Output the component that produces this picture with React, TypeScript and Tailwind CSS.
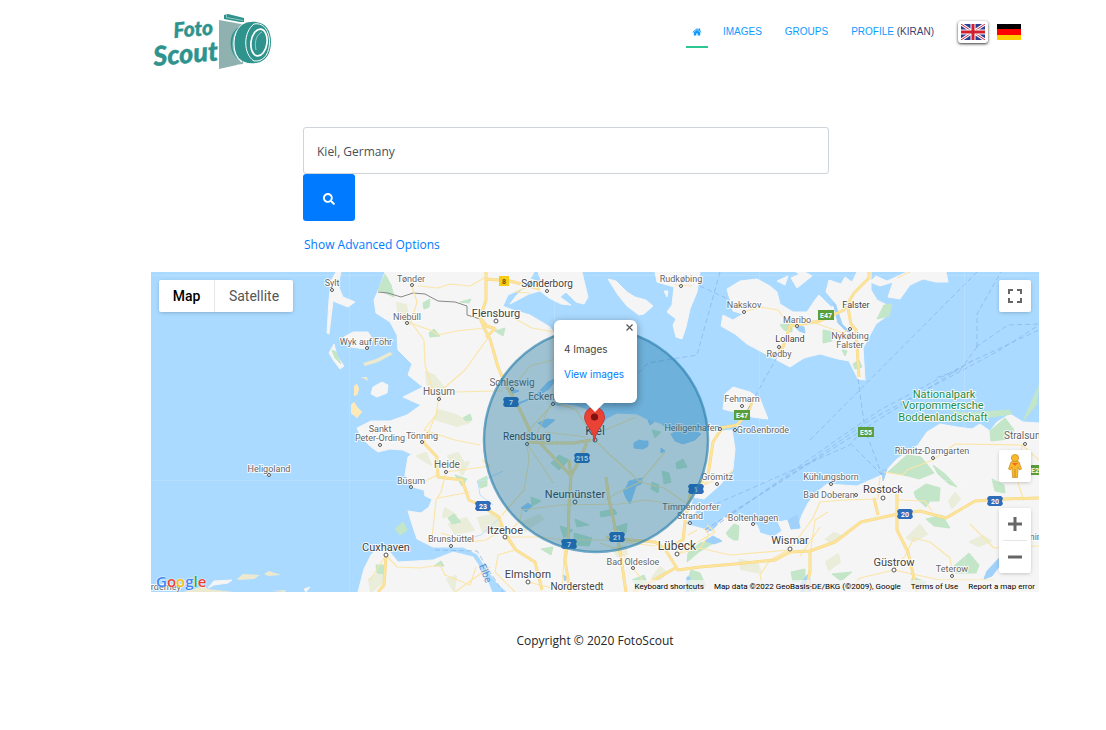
import React from "react";
import { FaSearch } from "react-icons/fa";

type Place = { name: string; x: number; y: number; size?: number; dot?: [number, number]; dark?: boolean };

const places: Place[] = [
  { name: "Sylt", x: 332, y: 286, dot: [332, 290] },
  { name: "Tønder", x: 411, y: 282, dot: [412, 285] },
  { name: "Niebüll", x: 407, y: 320, dot: [407, 323] },
  { name: "Wyk auf Föhr", x: 366, y: 345, dot: [367, 348] },
  { name: "Flensburg", x: 496, y: 317, size: 11, dot: [496, 321], dark: true },
  { name: "Sønderborg", x: 547, y: 287, size: 10, dot: [547, 291], dark: true },
  { name: "Rudkøbing", x: 681, y: 282, dot: [681, 286] },
  { name: "Nakskov", x: 744, y: 308, dot: [744, 312] },
  { name: "Maribo", x: 797, y: 323, dot: [797, 326] },
  { name: "Lolland", x: 790, y: 342, dark: true },
  { name: "Rødby", x: 779, y: 357, dot: [779, 347] },
  { name: "Falster", x: 856, y: 308, dark: true },
  { name: "Nykøbing", x: 850, y: 339, dot: [850, 329] },
  { name: "Falster", x: 850, y: 348 },
  { name: "Schleswig", x: 512, y: 386, size: 10, dot: [512, 389] },
  { name: "Husum", x: 439, y: 395, size: 10, dot: [439, 399] },
  { name: "Eckernförde", x: 555, y: 400, size: 10, dot: [553, 404] },
  { name: "Sankt", x: 380, y: 432 },
  { name: "Peter-Ording", x: 380, y: 441, dot: [380, 445] },
  { name: "Tönning", x: 422, y: 439, dot: [422, 442] },
  { name: "Rendsburg", x: 527, y: 440, size: 10, dot: [527, 444], dark: true },
  { name: "Kiel", x: 595, y: 435, size: 12, dot: [595, 440], dark: true },
  { name: "Fehmarn", x: 742, y: 402, dot: [742, 406] },
  { name: "Heiligenhafen", x: 692, y: 431, dot: [720, 429] },
  { name: "Großenbrode", x: 763, y: 433, dot: [735, 430] },
  { name: "Heligoland", x: 269, y: 472, dot: [269, 475] },
  { name: "Heide", x: 447, y: 468, size: 10, dot: [446, 472] },
  { name: "Büsum", x: 411, y: 484, dot: [411, 487] },
  { name: "Neumünster", x: 575, y: 498, size: 11, dot: [575, 502], dark: true },
  { name: "Itzehoe", x: 505, y: 534, size: 11, dot: [505, 537], dark: true },
  { name: "Brunsbüttel", x: 451, y: 542, dot: [451, 546] },
  { name: "Cuxhaven", x: 386, y: 551, size: 11, dot: [386, 555], dark: true },
  { name: "Elmshorn", x: 528, y: 578, size: 11, dot: [528, 582], dark: true },
  { name: "Norderstedt", x: 577, y: 590, size: 10, dark: true },
  { name: "Bad Oldesloe", x: 633, y: 565, dot: [633, 568] },
  { name: "Lübeck", x: 677, y: 550, size: 12, dot: [677, 554], dark: true },
  { name: "Grömitz", x: 717, y: 480, dot: [717, 484] },
  { name: "Timmendorfer", x: 691, y: 510 },
  { name: "Strand", x: 690, y: 519, dot: [690, 523] },
  { name: "Boltenhagen", x: 753, y: 521, dot: [753, 524] },
  { name: "Wismar", x: 790, y: 544, size: 11, dot: [790, 549], dark: true },
  { name: "Kühlungsborn", x: 831, y: 480, dot: [831, 484] },
  { name: "Bad Doberan", x: 829, y: 498, dot: [856, 495] },
  { name: "Rostock", x: 883, y: 493, size: 11, dot: [883, 498], dark: true },
  { name: "Ribnitz-Damgarten", x: 932, y: 454, dot: [933, 458] },
  { name: "Stralsund", x: 1025, y: 439, size: 10, dot: [1025, 444] },
  { name: "Güstrow", x: 894, y: 566, size: 11, dot: [894, 570], dark: true },
  { name: "Teterow", x: 952, y: 572, dot: [952, 576] },
  { name: "Demmin", x: 1025, y: 540 },
  { name: "Norderney", x: 160, y: 590 },
];

const land = [
  "M385 272 L378 291 L374 300 L376 313 L390 322 L397 335 L398 350 L412 364 L408 375 L423 387 L403 397 L421 405 L407 415 L390 421 L371 421 L357 428 L361 437 L370 446 L378 452 L390 449 L403 450 L411 454 L424 444 L408 457 L405 475 L413 487 L424 490 L425 496 L432 499 L429 507 L421 513 L408 511 L412 524 L417 539 L433 547 L463 547 L477 554 L487 569 L497 583 L507 592 L1039 592 L1039 423 L1023 422 L1010 414 L997 422 L990 431 L980 424 L972 429 L957 427 L940 424 L927 432 L918 445 L897 459 L882 475 L873 479 L857 486 L827 484 L817 492 L808 503 L802 515 L797 530 L789 520 L778 522 L782 531 L773 537 L760 533 L757 525 L740 517 L730 514 L722 519 L712 532 L700 528 L685 524 L697 510 L691 504 L693 497 L704 499 L720 485 L733 469 L735 449 L732 430 L713 432 L690 430 L667 429 L660 424 L647 420 L637 415 L617 414 L607 419 L597 431 L593 412 L575 406 L553 403 L571 397 L575 367 L550 327 L530 315 L513 310 L502 306 L493 315 L502 308 L508 295 L523 288 L532 276 L534 272 Z",
  "M358 592 L364 569 L371 555 L378 547 L389 551 L398 562 L433 560 L453 552 L473 557 L485 575 L492 592 Z",
  "M510 304 L516 296 L524 288 L518 280 L531 279 L542 283 L538 272 L582 272 L585 285 L588 297 L584 304 L576 302 L566 292 L560 297 L571 305 L561 304 L549 298 L540 291 L529 294 Z",
  "M733 387 L750 392 L760 399 L768 419 L752 417 L743 412 L730 411 L723 409 L725 394 Z",
  "M727 289 L740 281 L757 279 L770 286 L777 292 L780 304 L793 312 L807 312 L815 300 L819 295 L831 307 L838 306 L826 292 L829 280 L841 284 L845 277 L852 282 L857 272 L871 272 L871 290 L877 300 L891 307 L888 315 L876 324 L863 348 L865 380 L858 379 L849 361 L838 359 L820 354 L804 358 L790 367 L777 360 L747 344 L735 334 L721 326 L723 315 L733 320 L743 314 L733 311 Z",
  "M655 272 L700 272 L697 292 L690 309 L686 327 L682 339 L676 337 L673 325 L676 319 L667 312 L672 305 L674 287 L657 282 Z",
  "M608 279 L616 281 L627 292 L635 297 L646 300 L653 306 L644 314 L639 315 L627 306 L618 295 Z",
  "M888 297 L893 282 L880 286 L870 282 L876 276 L887 281 L907 272 L946 272 L948 282 L936 282 L923 279 L910 285 L900 299 Z",
  "M341 272 L338 285 L343 297 L355 302 L348 307 L333 301 L329 334 L327 333 L329 300 L331 281 L336 272 Z",
  "M344 337 L353 332 L368 332 L373 340 L365 349 L351 347 Z",
  "M334 344 L337 356 L344 366 L340 369 L334 361 L329 353 Z",
  "M373 387 L382 382 L388 385 L387 393 L377 397 L371 394 Z",
  "M777 281 L788 276 L785 285 Z M791 278 L805 272 L812 276 L797 288 Z M796 272 L803 272 L805 278 Z",
  "M208 588 L214 581 L232 580 L228 583 L214 585 Z M304 589 L310 587 L306 592 Z M664 291 L668 291 L667 297 Z",
];

const sand = [
  "M363 363 L376 359 L390 352 L393 354 L378 362 L365 366 Z",
  "M354 386 L357 384 L359 389 L357 395 L354 396 Z M351 405 L354 402 L358 408 L362 412 L357 418 L351 413 Z",
  "M237 579 L243 574 L260 575 L254 579 L239 580 Z M264 574 L269 571 L281 575 L268 576 Z M183 592 L204 586 L208 589 L233 592 Z",
  "M361 377 L367 377 L368 381 Z M271 591 L285 590 L286 592 Z",
];

const greens = [
  "M378 290 L385 274 L391 285 L394 297 Z", "M423 303 l7 -4 -1 8 -5 2 Z", "M429 333 l5 -4 6 7 -10 1 Z",
  "M460 302 l11 -3 -2 4 Z", "M495 331 l10 -3 -2 8 Z", "M463 418 l7 -4 2 6 -6 1 Z", "M448 518 l6 -4 7 8 -9 2 Z",
  "M477 481 l10 -5 0 10 -7 2 Z", "M455 475 l12 4 -5 7 Z", "M541 549 l12 -2 -2 8 Z", "M560 526 l13 4 -9 8 Z",
  "M575 519 l14 6 -12 2 Z", "M559 455 l10 5 -10 10 -8 -7 Z", "M531 497 l10 4 -9 5 Z", "M662 471 l7 2 2 9 -7 2 Z",
  "M652 482 l7 3 -1 8 -7 -4 Z", "M574 533 l18 5 -3 8 -15 -1 Z", "M613 528 l14 -5 -1 10 Z",
  "M726 533 l8 -9 5 2 -1 14 -4 0 -5 -3 Z", "M688 553 l12 -10 20 -4 -21 13 -12 10 Z", "M691 570 l9 3 6 13 -14 6 -5 -10 Z",
  "M888 472 l19 -17 14 2 13 16 -15 6 -11 -3 Z", "M914 492 l12 -8 14 4 -1 13 -9 0 -4 6 -10 -9 Z",
  "M933 465 l12 9 12 13 -8 -3 -11 -10 Z", "M926 519 l16 -4 8 13 -16 -2 Z", "M954 566 l15 -13 10 12 -3 8 -20 0 Z",
  "M791 572 l14 -3 0 11 -12 2 Z", "M832 574 l20 -2 -11 9 Z", "M913 577 l13 5 -7 8 -9 -8 Z",
  "M992 479 l12 6 1 8 -10 -2 Z", "M990 431 l15 -13 9 12 -6 9 -17 2 Z", "M1023 421 l9 -20 7 -15 -3 19 Z",
  "M780 325 l12 -4 0 11 -8 -2 Z", "M892 304 l-3 12 -12 3 7 -14 Z", "M950 411 l17 2 42 -3 3 4 -35 5 Z",
  "M853 364 l6 -4 3 7 -7 2 Z", "M823 330 l10 2 -1 9 -9 2 Z", "M842 350 l5 1 -2 5 Z",
  "M652 430 l9 2 -6 6 Z", "M676 463 l7 -4 4 8 -10 2 Z", "M600 512 l14 -3 3 5 -16 3 Z",
  "M395 529 l8 -7 4 8 -7 5 Z", "M376 565 l8 0 2 9 -9 -1 Z", "M434 566 l7 -5 3 5 Z",
  "M632 580 l12 -5 3 7 -9 6 Z", "M332 350 l4 2 5 12 -6 -6 Z",
];

const woods = [
  "M397 303 l9 2 4 19 -11 -6 Z", "M426 372 l9 4 5 20 -13 -12 Z", "M436 378 l9 11 -7 3 Z",
  "M448 456 l10 -3 5 8 -13 -1 Z", "M438 410 l15 4 17 8 -13 4 -22 -7 Z", "M445 508 l11 7 -13 2 Z",
  "M449 524 l17 -6 8 12 -19 4 Z", "M417 456 l9 -3 5 12 Z", "M478 518 l17 -4 6 14 -18 4 Z",
  "M457 464 l12 -2 -7 13 Z", "M522 522 l18 -7 3 4 -18 12 Z", "M369 579 l12 -7 4 8 -14 12 Z",
  "M447 579 l9 -3 -2 15 Z", "M612 548 l13 -2 2 8 -10 2 Z", "M652 578 l8 -11 7 6 -8 7 Z",
  "M740 560 l18 4 3 9 -20 -4 Z", "M907 538 l13 -13 7 9 -12 7 Z", "M826 539 l8 -6 7 3 -10 7 Z",
  "M970 542 l13 -6 8 5 -12 5 Z", "M949 501 l6 -8 5 6 -8 9 Z", "M826 562 l12 -8 2 8 -11 8 Z",
  "M1004 560 l12 -8 7 16 -19 3 Z",
];

const lakes = [
  "M515 404 l19 -7 14 -15 9 -4 -8 11 -10 6 -20 9 Z", "M511 389 l8 2 -8 3 Z", "M538 423 l9 -4 8 1 -10 8 Z",
  "M634 443 l5 -3 4 1 5 0 0 5 -5 3 -9 -1 Z", "M671 434 l8 -4 15 0 7 4 -6 6 -12 4 -8 -3 Z",
  "M626 488 l3 -7 14 -3 -2 6 -5 2 -6 18 -4 -6 -3 -8 Z", "M521 508 l7 -5 4 3 -6 6 Z", "M661 448 l4 3 -4 2 Z",
  "M987 571 l15 -16 1 6 -11 15 -8 3 Z", "M801 583 l8 -10 2 18 -10 1 Z", "M788 520 l9 -5 3 13 -9 1 Z",
  "M705 541 l8 -5 9 5 -8 3 Z", "M687 577 l3 0 -1 15 -3 0 Z", "M882 470 l5 -1 -4 12 Z",
  "M794 325 l10 2 1 6 -6 -2 Z", "M563 575 l4 2 -2 4 Z", "M648 420 l6 2 -4 3 Z", "M833 302 l3 4 6 18 8 8 -4 -1 -8 -8 Z",
];

const minorRoads = [
  "M418 286 L438 288 L450 284 L470 286 L486 277 M412 286 L417 302 L411 322 L424 340 L425 365 L432 387 L439 396 L436 415 L424 442",
  "M407 322 L430 330 L438 335 L456 331 L495 327 M439 396 L455 392 L494 391 L503 391 M490 335 L465 370 L443 389",
  "M496 316 L514 318 L532 328 L554 332 M512 389 L530 366 L560 358 M438 412 L424 430 L455 440 L480 445",
  "M446 472 L441 492 L436 500 L432 538 M446 472 L490 466 L482 460 M438 498 L470 492 M424 482 L437 475",
  "M441 533 L470 542 L486 540 L502 530 M505 537 L520 520 L522 510 L560 505 L620 504 L645 500 L680 505",
  "M527 444 L529 460 L524 490 L502 515 M527 444 L545 470 L553 483 M545 432 L587 437 M505 537 L540 537 L565 540 L605 540 L655 546",
  "M595 440 L610 455 L625 468 L640 482 L615 494 L606 500 M640 482 L665 452 M640 482 L664 488 L689 505",
  "M605 430 L636 417 M551 404 L535 437 L527 444 M595 440 L576 410 L553 401 M553 404 L520 440",
  "M386 555 L397 567 L420 568 L440 565 L445 575 L470 585 L476 567 M386 555 L370 580 M455 592 L490 567",
  "M505 537 L515 550 L498 555 L495 572 L515 592 M565 540 L562 592 M528 582 L560 590 M633 568 L620 550 L600 543 M633 568 L650 590",
  "M677 554 L700 548 L709 535 L704 528 M700 548 L730 555 L790 550 M688 535 L697 530 M677 554 L715 532 L707 525",
  "M790 549 L770 560 L760 575 L764 592 M790 549 L813 518 L820 502 L845 500 L878 499 M800 556 L820 527 M878 498 L880 477",
  "M810 554 L815 520 L828 512 M898 500 L925 501 L932 511 M884 472 L903 475 L907 470 L933 460 L955 444 L1022 445",
  "M894 570 L905 556 L914 538 L930 542 L950 558 L953 575 M894 570 L860 578 L850 588 L811 590 M894 570 L940 580 L994 580 M970 524 L994 548 L1039 546",
  "M1022 445 L1018 483 L1024 501 M1022 445 L1039 460 M744 312 L760 307 L778 310 L788 323 M812 322 L843 333 L850 328 M897 278 L910 272",
  "M675 285 L692 286 M713 474 L704 485 L720 478 L733 471 M538 283 L515 292 L530 293",
];

const majorRoads = [
  "M486 272 L486 300 L480 318 L485 330 L490 339 L498 367 L505 384 L515 400 L523 416 L530 431 L541 444 L571 476 L569 505 L568 543 L565 560 L570 592",
  "M486 337 L495 329 L487 326 L480 318 M486 279 L510 281 L540 289",
  "M423 442 L437 457 L438 477 L462 480 L469 500 L480 505 L499 517 L504 532 L516 550 L535 562 L542 590",
  "M587 442 L582 455 L571 476 M571 476 L569 460 M606 477 L609 500 L618 540 L622 565 L626 592",
  "M527 442 L550 443 L574 443 L591 440",
  "M722 428 L713 442 L708 475 L690 495 L685 522 L683 540 L665 549 L678 570 L700 567 L735 564 L775 560 L790 552 L810 551 L835 542 L861 522 L898 514 L920 511 L946 518 L975 501 L1005 499 L1039 498",
  "M897 494 L897 530 L908 552 L917 592 M633 592 L677 567 M386 557 L384 585 L378 592",
  "M606 537 L618 539 L655 542 L665 549 M720 428 L737 425 L748 412 L752 402 M790 326 L820 321 L844 310 L854 293 L869 278 L869 272",
  "M790 326 L783 347 L779 352 M848 308 L851 324 L856 330 L859 377 M874 498 L878 515 M810 551 L810 571 L806 592",
];

const ferries = [
  "M720 272 L697 355 L648 363 L630 382 L615 405", "M700 286 L730 300", "M777 357 L757 393 L747 411",
  "M858 379 L865 430 L882 475 M882 475 L852 445", "M705 530 L810 462 L870 420 L1000 350 L1039 325",
  "M705 530 L870 425 L970 362 L1039 330", "M707 532 L835 441 L880 410 L974 360", "M709 507 L850 445 L865 427",
  "M977 347 L977 314 L1001 272 M977 347 L960 370 L935 378 M976 347 L1008 325 L1039 324",
  "M810 440 L977 272", "M435 550 L477 551 L490 572 L503 592",
];

type Shield = { label: string; x: number; y: number; kind: "blue" | "green" | "yellow" };
const shields: Shield[] = [
  { label: "8", x: 504, y: 281, kind: "yellow" },
  { label: "7", x: 511, y: 402, kind: "blue" },
  { label: "215", x: 582, y: 458, kind: "blue" },
  { label: "23", x: 483, y: 506, kind: "blue" },
  { label: "7", x: 569, y: 544, kind: "blue" },
  { label: "21", x: 617, y: 537, kind: "blue" },
  { label: "1", x: 696, y: 489, kind: "blue" },
  { label: "20", x: 905, y: 514, kind: "blue" },
  { label: "20", x: 995, y: 501, kind: "blue" },
  { label: "E47", x: 826, y: 315, kind: "green" },
  { label: "E47", x: 742, y: 415, kind: "green" },
  { label: "E55", x: 866, y: 432, kind: "green" },
  { label: "E251", x: 1039, y: 470, kind: "green" },
];

function RoadShield({ label, x, y, kind }: Shield) {
  const fill = kind === "blue" ? "#2f6cb9" : kind === "green" ? "#5a9e3c" : "#f5cc16";
  const w = kind === "yellow" ? 5 : 8;
  return (
    <g transform={`translate(${x} ${y})`}>
      {kind === "blue" ? (
        <path d="M-6 -5 H6 L8 -3 L7 0 L8 3 L6 5 H-6 L-8 3 L-7 0 L-8 -3 Z" fill={fill} />
      ) : (
        <rect x={-w} y={-5} width={w * 2} height={10} fill={fill} />
      )}
      <text y={3} textAnchor="middle" fontSize={7} fontWeight={700} fill={kind === "yellow" ? "#665400" : "#fff"}>{label}</text>
    </g>
  );
}

function MapCanvas() {
  return (
    <svg className="absolute inset-0 h-full w-full font-[Roboto,sans-serif]" viewBox="151 272 888 320" preserveAspectRatio="xMidYMid slice" role="img" aria-label="Map of Kiel and surroundings">
      <rect x="-400" y="0" width="2200" height="900" fill="#aadaff" />
      <g fill="#f5f5f5" stroke="#f5f5f5" strokeWidth="1" strokeLinejoin="round">
        {land.map((d, i) => <path key={i} d={d} />)}
      </g>
      <g fill="#ece9cf">{sand.map((d, i) => <path key={i} d={d} />)}</g>
      <path d={sand[1]} fill="#ffe9b8" />
      <g fill="#e9edda" stroke="#e9edda" strokeWidth="2" strokeLinejoin="round">{woods.map((d, i) => <path key={i} d={d} />)}</g>
      <g fill="#c2e6c7" stroke="#c2e6c7" strokeWidth="1" strokeLinejoin="round">{greens.map((d, i) => <path key={i} d={d} />)}</g>
      <g fill="#9fd1fb" stroke="#9fd1fb" strokeLinejoin="round">{lakes.map((d, i) => <path key={i} d={d} />)}</g>
      <path d="M550 404 L558 398 L568 400 L560 406 Z M593 412 L602 416 L597 434 L592 430 Z" fill="#aadaff" />
      <path d="M493 505 L480 495 L478 483 L503 471 M501 517 L481 535 L462 540" fill="none" stroke="#bfe1fb" />
      <path d="M378 292 L388 293 L401 297 L413 293 L425 294 L438 301 L455 302 L467 306 L467 315 L480 319" fill="none" stroke="#888" strokeWidth="1" />
      <g fill="none" stroke="#fbe5a8" strokeWidth="1.2" strokeLinejoin="round">{minorRoads.map((d, i) => <path key={i} d={d} />)}</g>
      <g fill="none" stroke="#f7d784" strokeWidth="3" strokeLinejoin="round">{majorRoads.map((d, i) => <path key={i} d={d} />)}</g>
      <g fill="none" stroke="#fde49b" strokeWidth="2" strokeLinejoin="round">{majorRoads.map((d, i) => <path key={i} d={d} />)}</g>
      <g fill="none" stroke="#8db6ea" strokeWidth="0.8" strokeDasharray="5 3">{ferries.map((d, i) => <path key={i} d={d} />)}</g>
      <path d="M151 480.5 H1039 M349.5 272 V592 M554.5 272 V592 M759.5 272 V592 M964.5 272 V592 M151 275.5 H1039" stroke="#fff" strokeOpacity="0.15" />
      <g stroke="#fff" strokeWidth="2" strokeLinejoin="round" strokeOpacity="0.85">
        {places.map((p) => (
          <text key={`${p.name}${p.y}`} x={p.x} y={p.y} textAnchor="middle" fontSize={p.size ?? 9} fill={p.dark ? "#444" : "#666"} paintOrder="stroke">{p.name}</text>
        ))}
        <g fill="#1e8e4c" fontSize="11" textAnchor="middle">
          <text x="944" y="398" paintOrder="stroke">Nationalpark</text>
          <text x="943" y="409" paintOrder="stroke">Vorpommersche</text>
          <text x="943" y="421" paintOrder="stroke">Boddenlandschaft</text>
        </g>
      </g>
      <text x="486" y="577" fontSize="10" fill="#5a8fd0" textAnchor="middle" transform="rotate(68 486 573)">Elbe</text>
      <g fill="#fff" stroke="#555" strokeWidth="1">
        {places.filter((p) => p.dot).map((p) => (
          <circle key={`${p.name}-dot`} cx={p.dot![0]} cy={p.dot![1]} r={(p.size ?? 9) > 10 ? 2 : 1.5} />
        ))}
      </g>
      {shields.map((s, i) => <RoadShield key={i} {...s} />)}
      <circle cx="596" cy="440" r="112" fill="#006496" fillOpacity="0.35" stroke="#2b80ac" strokeOpacity="0.65" strokeWidth="2.5" />
      <path d="M594.5 441 C593.5 434 590.5 430 587.5 425.5 C585.5 422 584.5 420 584.5 417 A10 10 0 0 1 604.5 417 C604.5 420 603.5 422 601.5 425.5 C598.5 430 595.5 434 594.5 441 Z" fill="#ea4335" stroke="#c5221f" strokeWidth="0.7" />
      <circle cx="594.5" cy="417" r="3.6" fill="#811411" />
    </svg>
  );
}

function GoogleLogo() {
  return (
    <a href="#google" aria-label="Google" className="absolute bottom-px left-[5px] font-['Open_Sans',sans-serif] text-[15px] leading-5 font-semibold text-[#4285f4] [text-shadow:0_0_1px_#fff,0_0_2px_#fff]">
      G<span className="text-[#ea4335]">o</span><span className="text-[#fbbc04]">o</span>g<span className="text-[#34a853]">l</span><span className="text-[#ea4335]">e</span>
    </a>
  );
}

function Logo() {
  return (
    <svg width="120" height="60" viewBox="153 11 120 60" role="img" aria-label="Foto Scout">
      <g fill="#2f938d" stroke="#2f938d" fontFamily="Lato, sans-serif" fontStyle="italic" fontWeight="900">
        <text x="174" y="38" fontSize="21" strokeWidth="0.4" transform="rotate(-5 174 38)">Foto</text>
        <text x="154" y="66" fontSize="27" strokeWidth="0.4" transform="rotate(-5 154 66)">Scout</text>
      </g>
      <path d="M219 20 L236 23 L237 65 L219 69 Z" fill="#8fb2b1" />
      <path d="M235 23 L247 25 L243 64 L234 65 Z" fill="#8fb2b1" />
      <path d="M224 15 L228 14 L244 18 V22 L240 22 L224 19 Z" fill="#2f938d" />
      <path d="M226.5 15 V17.5 L243 20.5" fill="none" stroke="#b9d8d6" strokeWidth="0.7" />
      <path d="M240 27 C228 31 227 53 240 61 Z" fill="#2f938d" />
      <path d="M243 24 C231 33 231 54 242 62" fill="none" stroke="#fff" strokeWidth="1.3" />
      <path d="M239 28 C231 35 231 52 238 59" fill="none" stroke="#b9d8d6" strokeWidth="0.7" />
      <path d="M256 22 C240 20 235 32 235 43 C235 56 241 65 256 63 C266 62 271 53 271 42 C271 31 266 23 256 22 Z" fill="#2f938d" />
      <path d="M254 24 C243 32 243 54 254 61 M254 24 C265 22 269.5 33 269.5 42 C269.5 52 265 62 254 61" fill="none" stroke="#fff" strokeWidth="1" />
      <ellipse cx="259" cy="42.5" rx="8" ry="13.5" transform="rotate(8 259 42.5)" fill="#2f938d" stroke="#fff" strokeWidth="1.7" />
      <path d="M256 50 C254 41 257 34 262 32" fill="none" stroke="#a9d0ce" strokeWidth="0.9" />
    </svg>
  );
}

function HomeIcon() {
  return (
    <svg width="10" height="10" viewBox="0 0 1792 1792" fill="currentColor" aria-hidden="true">
      <path d="M1472 992v480q0 26-19 45t-45 19h-384v-384h-256v384h-384q-26 0-45-19t-19-45v-480q0-1 .5-3t.5-3l575-474 575 474q1 2 1 6zm223-69l-62 74q-8 9-21 11h-3q-13 0-21-7l-692-577-692 577q-12 8-24 7-13-2-21-11l-62-74q-8-10-7-23.5t11-21.5l719-599q32-26 76-26t76 26l244 204v-195q0-14 9-23t23-9h192q14 0 23 9t9 23v408l219 182q10 8 11 21.5t-7 23.5z" />
    </svg>
  );
}

function UkFlag() {
  return (
    <svg width="24" height="16" viewBox="0 0 24 16" aria-hidden="true">
      <rect width="24" height="16" fill="#2b3f94" />
      <path d="M0 0 L24 16 M24 0 L0 16" stroke="#fff" strokeWidth="3" />
      <path d="M0 0 L24 16 M24 0 L0 16" stroke="#cf2a3c" strokeWidth="1" />
      <path d="M12 0 V16 M0 8 H24" stroke="#fff" strokeWidth="5" />
      <path d="M12 0 V16 M0 8 H24" stroke="#d0202f" strokeWidth="3" />
    </svg>
  );
}

function Header() {
  return (
    <header className="flex items-start justify-between pt-[11px]">
      <a href="#home" className="ml-[2px] block"><Logo /></a>
      <div className="mr-[18px] flex items-start pt-[10px]">
        <nav className="flex gap-[23px] font-['Liberation_Sans',sans-serif] text-[10px] leading-[22px] text-[#0d9bff]">
          <a href="#home" aria-label="Home" className="-mr-2 flex h-[27px] w-[22px] justify-center border-b-2 border-[#2cc694] pt-[6px]"><HomeIcon /></a>
          <a href="#images">IMAGES</a>
          <a href="#groups">GROUPS</a>
          <a href="#profile">PROFILE <span className="text-[#3b4270]">(KIRAN)</span></a>
        </nav>
        <button type="button" aria-label="English" className="ml-6 rounded-[3px] bg-white p-[3px] shadow-[0_1px_3px_rgba(0,0,0,0.8)]"><UkFlag /></button>
        <button type="button" aria-label="Deutsch" className="mt-[3px] ml-[9px]">
          <svg width="24" height="16" viewBox="0 0 24 16" aria-hidden="true">
            <rect width="24" height="6" fill="#000" /><rect y="5" width="24" height="6" fill="#f00" /><rect y="11" width="24" height="5" fill="#fc0" />
          </svg>
        </button>
      </div>
    </header>
  );
}

const control = "absolute rounded-[2px] bg-white shadow-[0_1px_4px_-1px_rgba(0,0,0,0.3)]";

export default function App() {
  return (
    <div className="min-h-screen bg-white pr-[67px] pl-[151px] font-['Open_Sans','Noto_Sans',sans-serif] text-[12px] leading-5 text-[#212529]">
      <Header />
      <main>
        <form className="mt-14 mr-[210px] ml-[152px]" onSubmit={(e) => e.preventDefault()}>
          <input aria-label="Location" defaultValue="Kiel, Germany" className="block h-[47px] w-full rounded-[3px] border border-[#ced4da] px-[13px] pt-[2px] text-[#495057] outline-none" />
          <button type="submit" aria-label="Search" className="flex h-[47px] w-[52px] items-center justify-center rounded-[3px] bg-[#007bff] pt-[2px] text-white"><FaSearch size={12} /></button>
          <a href="#advanced" className="mt-[14px] ml-px block w-fit text-[#007bff]">Show Advanced Options</a>
        </form>
        <section className="relative mt-[17px] h-80 overflow-hidden bg-[#aadaff] font-[Roboto,sans-serif]">
          <MapCanvas />
          <div className={`${control} top-2 left-2 flex h-8 text-[14px]`}>
            <button type="button" className="w-14 border-r border-[#e6e6e6] font-medium text-black">Map</button>
            <button type="button" className="w-[78px] text-[#565656]">Satellite</button>
          </div>
          <button type="button" aria-label="Toggle fullscreen view" className={`${control} top-2 right-2 flex size-8 items-center justify-center`}>
            <svg width="16" height="14" viewBox="0 0 16 14" fill="none" stroke="#666" strokeWidth="2"><path d="M2 5V1H6M10 1H14V5M14 9V13H10M6 13H2V9" /></svg>
          </button>
          <button type="button" aria-label="Street View" className={`${control} top-[178px] right-2 flex size-8 items-center justify-center`}>
            <svg width="16" height="24" viewBox="0 0 16 24">
              <path d="M4 8 Q8 6 12 8 L14.5 15 L12.5 16 L11 13 L10.5 23.5 H5.5 L5 13 L3.5 16 L1.5 15 Z" fill="#fbb829" stroke="#c28a22" strokeWidth="0.7" />
              <path d="M8 15 V23" stroke="#b9801a" strokeWidth="0.7" />
              <circle cx="8" cy="4" r="3.6" fill="#fbb829" stroke="#c28a22" strokeWidth="0.7" />
              <path d="M5 9 L8 12 L11 9 Z" fill="#ef6c22" />
            </svg>
          </button>
          <div className={`${control} top-[236px] right-2 flex w-8 flex-col items-center`}>
            <button type="button" aria-label="Zoom in" className="flex size-8 items-center justify-center"><svg width="14" height="14" viewBox="0 0 14 14" stroke="#666" strokeWidth="3"><path d="M7 0V14M0 7H14" /></svg></button>
            <span className="h-px w-6 bg-[#e6e6e6]" />
            <button type="button" aria-label="Zoom out" className="flex size-8 items-center justify-center"><svg width="14" height="14" viewBox="0 0 14 14" stroke="#666" strokeWidth="3"><path d="M0 7H14" /></svg></button>
          </div>
          <div className="absolute top-12 left-1/2 -ml-[41px] h-[83px] w-[83px] rounded-[6px] bg-white shadow-[0_2px_7px_1px_rgba(0,0,0,0.3)]">
            <button type="button" aria-label="Close" className="absolute top-1 right-1 text-[#555]"><svg width="7" height="7" viewBox="0 0 7 7" stroke="currentColor" strokeWidth="1.2"><path d="M0.5 0.5L6.5 6.5M6.5 0.5L0.5 6.5" /></svg></button>
            <div className="flex flex-col gap-[5px] pt-[19px] pl-[10px] font-[Inter,sans-serif] text-[10px] leading-5 whitespace-nowrap text-[#444]">
              <p>4 Images</p>
              <a href="#view" className="text-[#007bff]">View images</a>
            </div>
            <svg className="absolute top-full left-[32px]" width="18" height="9" viewBox="0 0 18 9" aria-hidden="true"><path d="M0 0H18L9 9Z" fill="#fff" /></svg>
          </div>
          <GoogleLogo />
          <div className="absolute right-0 bottom-0 flex h-3 items-center gap-[10px] bg-[#f5f5f5]/70 px-1 pt-px text-[8px] leading-3 whitespace-nowrap text-black">
            <button type="button">Keyboard shortcuts</button>
            <span>Map data ©2022 GeoBasis-DE/BKG (©2009), Google</span>
            <a href="#terms">Terms of Use</a>
            <a href="#report">Report a map error</a>
          </div>
        </section>
      </main>
      <footer className="mt-[39px] text-center">Copyright © 2020 FotoScout</footer>
    </div>
  );
}
